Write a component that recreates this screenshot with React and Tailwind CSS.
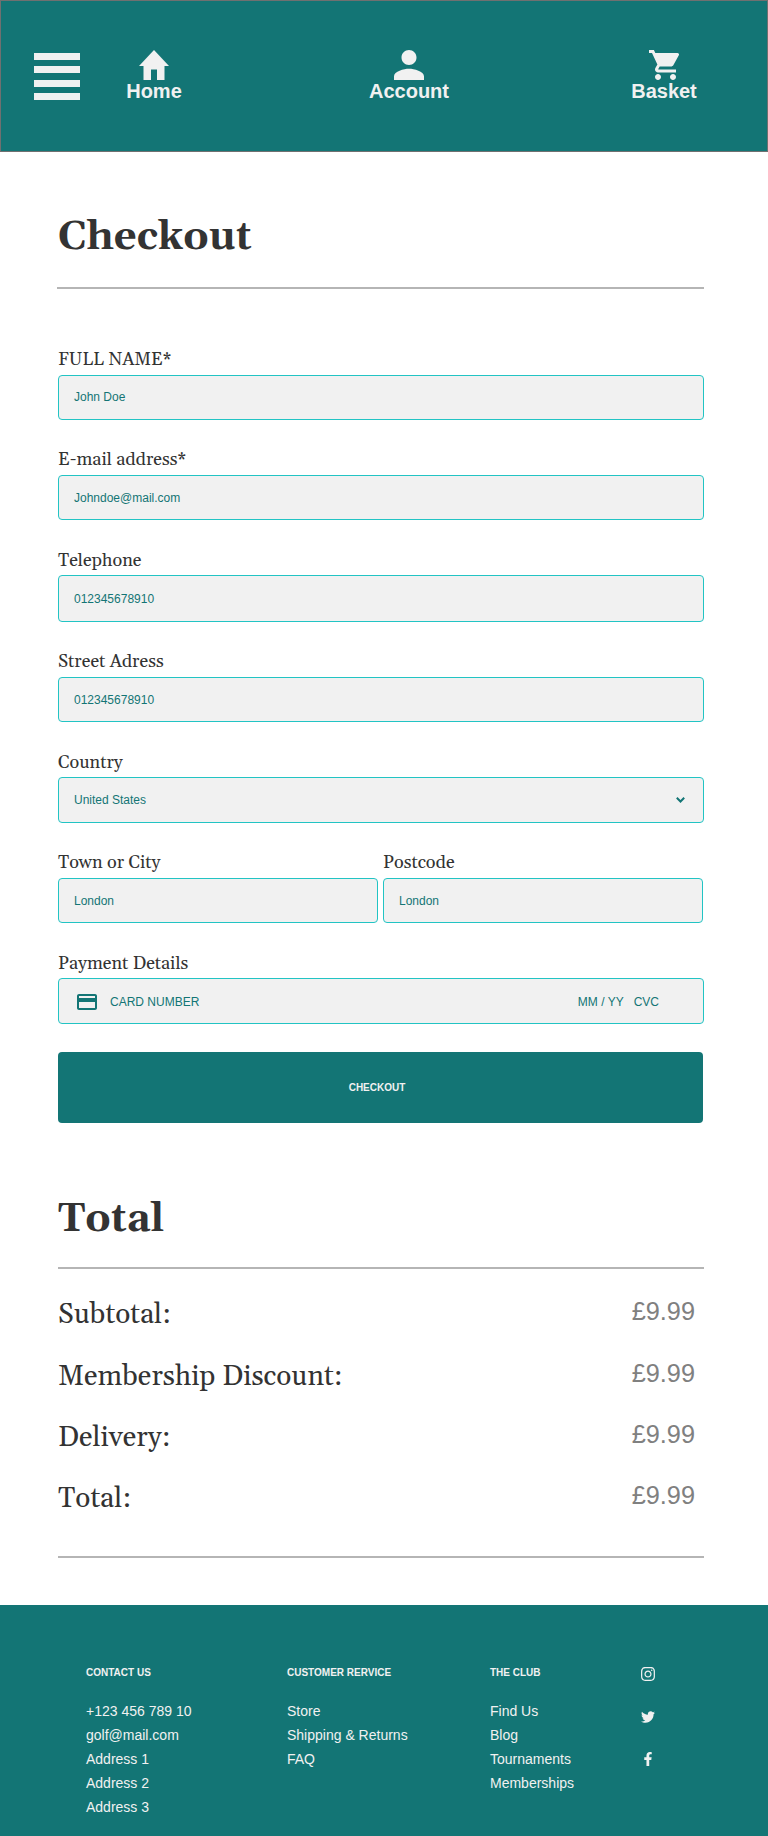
import { MdPerson, MdShoppingCart, MdOutlineCreditCard } from "react-icons/md";
import { FaInstagram, FaTwitter, FaFacebookF } from "react-icons/fa";

const serif = "font-['Gelasio','Georgia','Liberation_Serif',serif]";

function NavItem({ label, className, children }) {
  return (
    <a className={`flex flex-col items-center ${className}`}>
      {children}
      <span className="mt-[3px] text-xl leading-[16px] font-bold">{label}</span>
    </a>
  );
}

function Header() {
  return (
    <header className="flex h-[152px] items-start border border-[#707070] bg-[#137575] pl-[33px] text-[#f1f1f1]">
      <button className="mt-[52px] flex h-[47px] w-[46px] flex-col justify-between">
        <span className="h-[7px] w-full bg-current" />
        <span className="h-[7px] w-full bg-current" />
        <span className="h-[7px] w-full bg-current" />
        <span className="h-[7px] w-full bg-current" />
      </button>
      <NavItem label="Home" className="mt-[49px] ml-[46px] w-[56px]">
        <svg viewBox="2 3 20 17" preserveAspectRatio="none" className="h-[30px] w-[30px] fill-current">
          <path d="M10 20v-6h4v6h5v-8h3L12 3 2 12h3v8z" />
        </svg>
      </NavItem>
      <NavItem label="Account" className="mt-[49px] ml-[186px] w-[82px]">
        <MdPerson viewBox="4 4 16 16" className="h-[30px] w-[30px]" />
      </NavItem>
      <NavItem label="Basket" className="mt-[49px] ml-[180px] w-[68px]">
        <MdShoppingCart viewBox="1 2 20 20" className="h-[30px] w-[30px]" />
      </NavItem>
    </header>
  );
}

function Field({ label, className = "", labelClass = "pt-px", box, children }) {
  return (
    <label className={`flex flex-col ${className}`}>
      <span className={`${serif} h-[26px] text-[18px] leading-[20px] text-[#333] ${labelClass}`}>{label}</span>
      <span className={`flex items-center rounded-[4px] border border-[#22c4c4] bg-[#f1f1f1] pl-[15px] text-xs text-[#137575] ${box}`}>
        {children}
      </span>
    </label>
  );
}

function Checkout() {
  return (
    <form className="flex flex-col pr-[64px] pl-[58px]">
      <h1 className={`${serif} mt-[61px] text-[40px] leading-[50px] font-bold text-[#333]`}>Checkout</h1>
      <hr className="mt-[24px] -ml-px h-[2px] border-0 bg-[#b5b5b5]" />
      <Field label="FULL NAME*" className="mt-[60px]" box="h-[45px] pb-[2px]">John Doe</Field>
      <Field label="E-mail address*" className="mt-[29px]" box="h-[45px]">Johndoe@mail.com</Field>
      <Field label="Telephone" className="mt-[29px]" labelClass="pt-[2px]" box="h-[47px]">012345678910</Field>
      <Field label="Street Adress" className="mt-[29px]" box="h-[45px]">012345678910</Field>
      <Field label="Country" className="mt-[29px]" labelClass="pt-[2px]" box="h-[46px] justify-between pr-[18px]">
        United States
        <svg viewBox="0 0 9 6" className="h-[6px] w-[9px] fill-none stroke-current stroke-2">
          <path d="M.8 .8 4.5 4.5 8.2 .8" />
        </svg>
      </Field>
      <div className="mt-[29px] flex gap-[5px]">
        <Field label="Town or City" className="w-[320px]" box="h-[45px]">London</Field>
        <Field label="Postcode" className="w-[320px]" box="h-[45px]">London</Field>
      </div>
      <Field label="Payment Details" className="mt-[29px]" labelClass="pt-[2px]" box="h-[46px] pt-[2px]">
        <MdOutlineCreditCard viewBox="2 4 20 16" className="ml-[3px] h-[16px] w-[20px]" />
        <span className="ml-[13px]">CARD NUMBER</span>
        <span className="ml-auto">MM / YY</span>
        <span className="mr-[44px] ml-[10px]">CVC</span>
      </Field>
      <button className="mt-[28px] mr-px h-[71px] rounded-[4px] bg-[#137575] pr-[7px] text-[10px] font-bold text-[#f1f1f1]">CHECKOUT</button>
    </form>
  );
}

const totals = [
  ["Subtotal:", "£9.99", "h-[62px]"],
  ["Membership Discount:", "£9.99", "h-[61px]"],
  ["Delivery:", "£9.99", "h-[61px]"],
  ["Total:", "£9.99", "h-[61px]"],
];

function Totals() {
  return (
    <section className="flex flex-col pr-[64px] pl-[58px]">
      <h2 className={`${serif} mt-[72px] text-[40px] leading-[50px] font-bold text-[#333]`}>Total</h2>
      <hr className="mt-[22px] h-[2px] border-0 bg-[#b5b5b5]" />
      <dl className="mt-[24px] h-[263px]">
        {totals.map(([name, price, height]) => (
          <div key={name} className={`flex justify-between pr-[9px] ${height}`}>
            <dt className={`${serif} text-[28px] leading-[45px] text-[#333]`}>{name}</dt>
            <dd className="text-[25.3px] leading-[37px] text-[#808080]">{price}</dd>
          </div>
        ))}
      </dl>
      <hr className="h-[2px] border-0 bg-[#b5b5b5]" />
    </section>
  );
}

function FooterColumn({ title, items, className }) {
  return (
    <div className={className}>
      <h3 className="text-[10px] leading-[15px] font-bold">{title}</h3>
      <ul className="mt-[19px] text-sm leading-[24px]">
        {items.map((item) => (
          <li key={item}>{item}</li>
        ))}
      </ul>
    </div>
  );
}

function Footer() {
  return (
    <footer className="mt-[47px] flex h-[231px] bg-[#137575] pt-[60px] pl-[86px] text-[#f1f1f1]">
      <FooterColumn title="CONTACT US" className="w-[201px]" items={["+123 456 789 10", "golf@mail.com", "Address 1", "Address 2", "Address 3"]} />
      <FooterColumn title="CUSTOMER RERVICE" className="w-[203px]" items={["Store", "Shipping & Returns", "FAQ"]} />
      <FooterColumn title="THE CLUB" className="w-[151px]" items={["Find Us", "Blog", "Tournaments", "Memberships"]} />
      <div className="flex flex-col items-center pt-[2px]">
        <FaInstagram viewBox="0 31 448 450" className="h-[14px] w-[14px]" />
        <FaTwitter viewBox="0 48 512 416" className="mt-[30px] h-[12px] w-[14px]" />
        <FaFacebookF className="mt-[29px] h-[14px] w-[14px]" />
      </div>
    </footer>
  );
}

export default function App() {
  return (
    <div className="w-[768px] bg-white font-['Liberation_Sans',Arial,sans-serif]">
      <Header />
      <main>
        <Checkout />
        <Totals />
      </main>
      <Footer />
    </div>
  );
}
